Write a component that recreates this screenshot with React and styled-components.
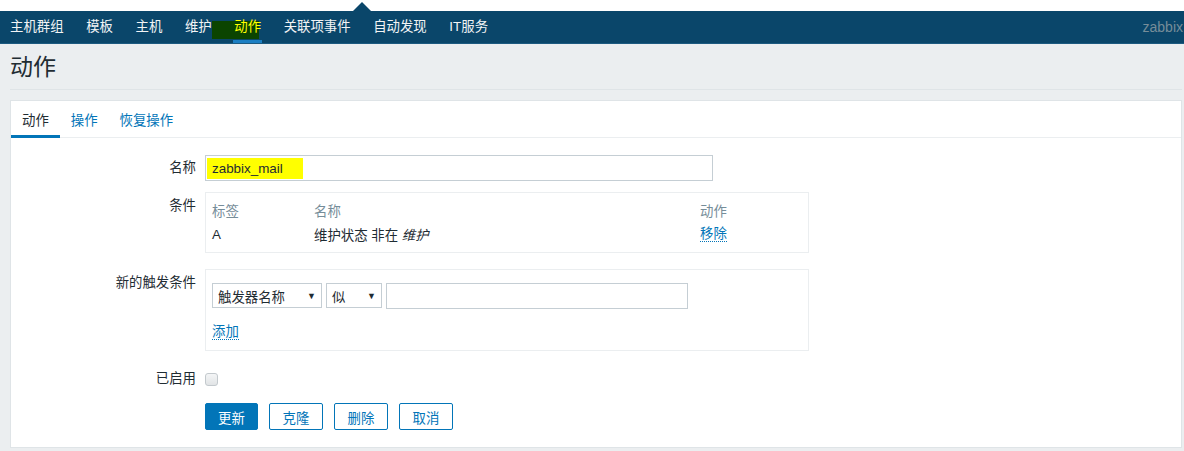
import styled, { createGlobalStyle } from "styled-components";

const GlobalStyle = createGlobalStyle`
  body {
    margin: 0;
    background: #ebeef0;
    font-family: "Liberation Sans", "Noto Sans CJK SC", sans-serif;
    font-size: 13.4px;
    color: #1f2c33;
  }
`;

const TopStrip = styled.div`
  height: 11px;
  background: #fff;
  position: relative;
  &::after {
    content: "";
    position: absolute;
    left: 353px;
    bottom: 0;
    border-left: 9px solid transparent;
    border-right: 9px solid transparent;
    border-bottom: 9px solid #0a466a;
  }
`;

const NavBar = styled.div`
  display: flex;
  align-items: stretch;
  height: 32px;
  background: #0a466a;
  border-bottom: 1px solid #1c5a80;
  padding-left: 10px;
`;

const NavItem = styled.div`
  position: relative;
  display: flex;
  align-items: center;
  margin-right: 22.6px;
  color: ${(p) => (p.$active ? "#ffff00" : "#f2f4f5")};
  line-height: 16px;
  span {
    position: relative;
    z-index: 1;
  }
  ${(p) =>
    p.$active &&
    `
    &::before {
      content: "";
      position: absolute;
      left: -22px;
      top: 10px;
      width: 47px;
      height: 18px;
      background: #0b4400;
    }
    &::after {
      content: "";
      position: absolute;
      left: -1px;
      right: -1px;
      bottom: 0;
      height: 3px;
      background: #1b7fc3;
    }
  `}
`;

const Brand = styled.div`
  margin-left: auto;
  display: flex;
  align-items: center;
  color: #768d99;
  font-size: 14px;
  margin-right: 1px;
`;

const Header = styled.div`
  height: 45px;
  margin: 0 2px 0 10px;
  border-bottom: 1px solid #dfe4e7;
  display: flex;
  align-items: center;
`;

const Title = styled.h1`
  margin: 0;
  font-weight: normal;
  font-size: 23px;
  line-height: 28px;
  color: #1f2c33;
`;

const Card = styled.div`
  margin: 10px 2px 0 10px;
  background: #fff;
  border: 1px solid #dfe4e7;
  height: 346px;
`;

const Tabs = styled.div`
  display: flex;
  height: 36px;
  border-bottom: 1px solid #ebeef0;
`;

const Tab = styled.div`
  display: flex;
  align-items: center;
  padding: 2px 11px 0 11px;
  color: ${(p) => (p.$active ? "#1f2c33" : "#0275b8")};
  border-bottom: 3px solid ${(p) => (p.$active ? "#0275b8" : "transparent")};
  margin-bottom: -1px;
`;

const Form = styled.div`
  display: flex;
  flex-direction: column;
  padding-top: 17px;
`;

const Row = styled.div`
  display: grid;
  grid-template-columns: 185px 1fr;
  column-gap: 9px;
  margin-top: ${(p) => p.$mt || 0}px;
  align-items: ${(p) => (p.$top ? "start" : "center")};
`;

const Label = styled.div`
  text-align: right;
  line-height: 20px;
  padding-top: ${(p) => (p.$top ? 4 : 0)}px;
`;

const TextInput = styled.div`
  box-sizing: border-box;
  width: ${(p) => p.$w}px;
  height: ${(p) => p.$h || 26}px;
  border: 1px solid #c5ced4;
  background: #fff;
  display: flex;
  align-items: center;
  padding-left: 1px;
`;

const Highlight = styled.span`
  background: #ffff00;
  padding: 2px 20px 2px 5px;
  line-height: 17px;
`;

const Box = styled.div`
  box-sizing: border-box;
  width: 604px;
  height: ${(p) => p.$h}px;
  border: 1px solid #ebeef0;
  padding: ${(p) => p.$pad};
`;

const CondRow = styled.div`
  display: grid;
  grid-template-columns: 102px 386px 1fr;
  height: 24px;
  align-items: center;
  color: ${(p) => (p.$head ? "#768d99" : "#1f2c33")};
`;

const Link = styled.span`
  color: #0275b8;
  border-bottom: 1px dotted #0275b8;
  justify-self: start;
  line-height: 15px;
`;

const Controls = styled.div`
  display: flex;
  align-items: flex-start;
  gap: 4px;
`;

const Select = styled.div`
  box-sizing: border-box;
  width: ${(p) => p.$w}px;
  height: 25px;
  border: 1px solid #c5ced4;
  display: flex;
  align-items: center;
  justify-content: space-between;
  padding: 0 5px;
  color: #1f2c33;
  i {
    font-style: normal;
    font-size: 9px;
    color: #1f2c33;
  }
`;

const AddWrap = styled.div`
  margin-top: 14px;
  height: 18px;
  display: flex;
  align-items: center;
`;

const Check = styled.span`
  box-sizing: border-box;
  width: 13px;
  height: 13px;
  border: 1px solid #c3c9cd;
  border-radius: 3px;
  background: linear-gradient(#f4f5f6, #e1e4e6);
`;

const Buttons = styled.div`
  display: flex;
  gap: 11px;
`;

const Button = styled.div`
  box-sizing: border-box;
  height: 27px;
  width: ${(p) => p.$w || 54}px;
  border: 1px solid #0275b8;
  border-radius: 2px;
  background: ${(p) => (p.$primary ? "#0275b8" : "#fff")};
  color: ${(p) => (p.$primary ? "#fff" : "#0275b8")};
  display: flex;
  align-items: center;
  justify-content: center;
`;

const navItems = ["主机群组", "模板", "主机", "维护", "动作", "关联项事件", "自动发现", "IT服务"];

export default function App() {
  return (
    <>
      <GlobalStyle />
      <TopStrip />
      <NavBar>
        {navItems.map((n) => (
          <NavItem key={n} $active={n === "动作"}>
            <span>{n}</span>
          </NavItem>
        ))}
        <Brand>zabbix</Brand>
      </NavBar>
      <Header>
        <Title>动作</Title>
      </Header>
      <Card>
        <Tabs>
          <Tab $active>动作</Tab>
          <Tab>操作</Tab>
          <Tab>恢复操作</Tab>
        </Tabs>
        <Form>
          <Row>
            <Label>名称</Label>
            <TextInput $w={508}>
              <Highlight>zabbix_mail</Highlight>
            </TextInput>
          </Row>
          <Row $mt={11} $top>
            <Label $top>条件</Label>
            <Box $h={61} $pad="5px 6px 0">
              <CondRow $head>
                <span>标签</span>
                <span>名称</span>
                <span>动作</span>
              </CondRow>
              <CondRow>
                <span>A</span>
                <span>
                  维护状态 非在 <em>维护</em>
                </span>
                <Link>移除</Link>
              </CondRow>
            </Box>
          </Row>
          <Row $mt={16} $top>
            <Label $top>新的触发条件</Label>
            <Box $h={82} $pad="13px 6px 0">
              <Controls>
                <Select $w={110}>
                  触发器名称<i>▼</i>
                </Select>
                <Select $w={56}>
                  似<i>▼</i>
                </Select>
                <TextInput $w={302} $h={26} />
              </Controls>
              <AddWrap>
                <Link>添加</Link>
              </AddWrap>
            </Box>
          </Row>
          <Row $mt={18}>
            <Label>已启用</Label>
            <Check />
          </Row>
          <Row $mt={14}>
            <span />
            <Buttons>
              <Button $primary $w={53}>更新</Button>
              <Button>克隆</Button>
              <Button>删除</Button>
              <Button>取消</Button>
            </Buttons>
          </Row>
        </Form>
      </Card>
    </>
  );
}
